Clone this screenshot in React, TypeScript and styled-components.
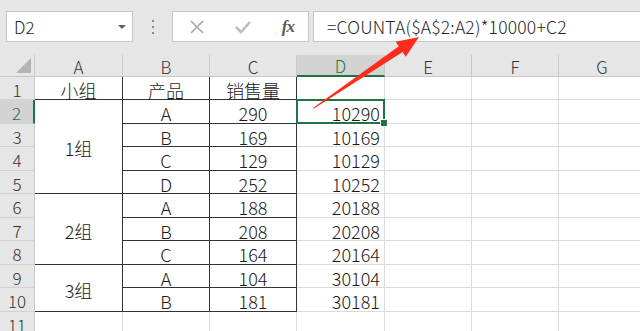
import React from "react";
import styled, { createGlobalStyle, css } from "styled-components";

const GlobalStyle = createGlobalStyle`
  html, body {
    margin: 0;
    padding: 0;
    background: #ffffff;
    overflow: hidden;
  }
  * {
    box-sizing: border-box;
  }
`;

const GREEN = "#217346";
const GRID = "#dadada";
const DARK = "#333333";
const FONT = `"Noto Sans CJK SC", "Liberation Sans", sans-serif`;

const Page = styled.div`
  position: relative;
  width: 640px;
  height: 331px;
  overflow: hidden;
  display: flex;
  flex-direction: column;
  font-family: ${FONT};
  font-weight: 300;
  color: #1a1a1a;
`;

// Formula bar
const FormulaBar = styled.div`
  height: 55px;
  flex: none;
  background: #e6e6e6;
  display: flex;
  align-items: flex-start;
  padding: 11px 0 0 6px;
`;

const Box = styled.div`
  height: 31px;
  background: #ffffff;
  border: 1px solid #c6c6c6;
  display: flex;
  align-items: center;
`;

const NameBox = styled(Box)`
  width: 127px;
  padding: 0 6px 0 7px;
  justify-content: space-between;
  font-size: 17px;
  color: #262626;
`;

const Caret = styled.span`
  width: 0;
  height: 0;
  border-left: 4px solid transparent;
  border-right: 4px solid transparent;
  border-top: 4px solid #606060;
`;

const Grip = styled.div`
  width: 39px;
  height: 31px;
  display: flex;
  flex-direction: column;
  align-items: center;
  justify-content: center;
  gap: 4px;
`;

const Dot = styled.span`
  width: 2px;
  height: 2px;
  background: #8c8c8c;
`;

const FxBox = styled(Box)`
  width: 137px;
  padding: 0 14px 0 17px;
  justify-content: space-between;
`;

const Fx = styled.span`
  font-family: "Liberation Serif", "DejaVu Serif", serif;
  font-style: italic;
  font-weight: bold;
  font-size: 17px;
  color: #5a5a5a;
  letter-spacing: -1px;
`;

const FormulaInput = styled(Box)`
  flex: 1;
  margin-left: 4px;
  border-right: none;
  padding-left: 13px;
  font-size: 17.5px;
  letter-spacing: 0.2px;
  color: #262626;
`;

// Sheet
const Sheet = styled.div`
  flex: 1;
  display: grid;
  grid-template-columns: 35px 88px 87px 87px 88px 87px 87px 87px;
  grid-template-rows: 22px 23px 24px 23px 24px 23px 24px 23px 24px 23px 24px 24px;
  font-size: 18px;
`;

const Corner = styled.div`
  position: relative;
  background: #e6e6e6;
  border-right: 1px solid #c8c8c8;
  border-bottom: 1px solid #c8c8c8;
  &::after {
    content: "";
    position: absolute;
    right: 3px;
    bottom: 3px;
    width: 0;
    height: 0;
    border-left: 15px solid transparent;
    border-bottom: 15px solid #b4b4b4;
  }
`;

const ColHead = styled.div<{ $active?: boolean }>`
  background: ${({ $active }) => ($active ? "#d3d3d3" : "#e6e6e6")};
  color: ${({ $active }) => ($active ? GREEN : "#333333")};
  border-right: 1px solid #c8c8c8;
  border-bottom: ${({ $active }) => ($active ? `2px solid ${GREEN}` : "1px solid #c8c8c8")};
  display: flex;
  align-items: center;
  justify-content: center;
  font-size: 17px;
  line-height: 1;
  padding-top: 1px;
`;

const RowHead = styled.div<{ $active?: boolean; $row: number }>`
  grid-row: ${({ $row }) => $row + 1};
  grid-column: 1;
  background: ${({ $active }) => ($active ? "#d3d3d3" : "#e6e6e6")};
  color: ${({ $active }) => ($active ? GREEN : "#333333")};
  border-right: ${({ $active }) => ($active ? `2px solid ${GREEN}` : "1px solid #c8c8c8")};
  border-bottom: 1px solid #d0d0d0;
  display: flex;
  align-items: center;
  justify-content: center;
  font-size: 17px;
  line-height: 1;
  padding-top: 2px;
`;

const Cell = styled.div<{
  $row: number;
  $col: number;
  $span?: number;
  $boxed?: boolean;
  $align?: "center" | "right";
  $selected?: boolean;
}>`
  position: relative;
  grid-row: ${({ $row, $span = 1 }) => `${$row + 1} / span ${$span}`};
  grid-column: ${({ $col }) => $col + 1};
  border-right: 1px solid ${({ $boxed }) => ($boxed ? DARK : GRID)};
  border-bottom: 1px solid ${({ $boxed }) => ($boxed ? DARK : GRID)};
  display: flex;
  align-items: center;
  justify-content: ${({ $align }) => ($align === "right" ? "flex-end" : "center")};
  padding: 3px 4px 0 4px;
  line-height: 1;
  ${({ $selected }) =>
    $selected &&
    css`
      &::after {
        content: "";
        position: absolute;
        left: -1px;
        top: -1px;
        right: -1px;
        bottom: -1px;
        border: 2px solid ${GREEN};
      }
      &::before {
        content: "";
        position: absolute;
        right: -4px;
        bottom: -4px;
        width: 6px;
        height: 6px;
        background: ${GREEN};
        border: 1px solid #ffffff;
        z-index: 2;
      }
    `}
`;

const Arrow = styled.svg`
  position: absolute;
  left: 0;
  top: 0;
  pointer-events: none;
`;

const columns = ["A", "B", "C", "D", "E", "F", "G"];

type Item = { product: string; sales: number; result: number };

const groups: { name: string; items: Item[] }[] = [
  {
    name: "1组",
    items: [
      { product: "A", sales: 290, result: 10290 },
      { product: "B", sales: 169, result: 10169 },
      { product: "C", sales: 129, result: 10129 },
      { product: "D", sales: 252, result: 10252 },
    ],
  },
  {
    name: "2组",
    items: [
      { product: "A", sales: 188, result: 20188 },
      { product: "B", sales: 208, result: 20208 },
      { product: "C", sales: 164, result: 20164 },
    ],
  },
  {
    name: "3组",
    items: [
      { product: "A", sales: 104, result: 30104 },
      { product: "B", sales: 181, result: 30181 },
    ],
  },
];

const App = () => {
  const cells: React.ReactNode[] = [];
  let row = 2;
  groups.forEach((g) => {
    cells.push(
      <Cell key={`g${row}`} $row={row} $col={1} $span={g.items.length} $boxed>
        {g.name}
      </Cell>
    );
    g.items.forEach((it) => {
      cells.push(
        <Cell key={`b${row}`} $row={row} $col={2} $boxed>
          {it.product}
        </Cell>,
        <Cell key={`c${row}`} $row={row} $col={3} $boxed>
          {it.sales}
        </Cell>,
        <Cell key={`d${row}`} $row={row} $col={4} $align="right" $selected={row === 2}>
          {it.result}
        </Cell>
      );
      for (let c = 5; c <= 7; c++) {
        cells.push(<Cell key={`e${row}-${c}`} $row={row} $col={c} />);
      }
      row++;
    });
  });

  return (
    <>
      <GlobalStyle />
      <Page>
        <FormulaBar>
          <NameBox>
            <span>D2</span>
            <Caret />
          </NameBox>
          <Grip>
            <Dot />
            <Dot />
            <Dot />
          </Grip>
          <FxBox>
            <svg width="14" height="14" viewBox="0 0 14 14">
              <path d="M1 1 L13 13 M13 1 L1 13" stroke="#a6a6a6" strokeWidth="1.6" fill="none" />
            </svg>
            <svg width="16" height="14" viewBox="0 0 16 14">
              <path d="M1 7 L6 12 L15 2" stroke="#bdbdbd" strokeWidth="2.6" fill="none" />
            </svg>
            <Fx>fx</Fx>
          </FxBox>
          <FormulaInput>=COUNTA($A$2:A2)*10000+C2</FormulaInput>
        </FormulaBar>

        <Sheet>
          <Corner />
          {columns.map((c) => (
            <ColHead key={c} $active={c === "D"}>
              {c}
            </ColHead>
          ))}
          {Array.from({ length: 11 }, (_, i) => (
            <RowHead key={i} $row={i + 1} $active={i === 1}>
              {i + 1}
            </RowHead>
          ))}
          <Cell $row={1} $col={1} $boxed>小组</Cell>
          <Cell $row={1} $col={2} $boxed>产品</Cell>
          <Cell $row={1} $col={3} $boxed>销售量</Cell>
          {[4, 5, 6, 7].map((c) => (
            <Cell key={`h${c}`} $row={1} $col={c} />
          ))}
          {cells}
          {[1, 2, 3, 4, 5, 6, 7].map((c) => (
            <Cell key={`r11-${c}`} $row={11} $col={c} />
          ))}
        </Sheet>

        <Arrow width="640" height="331" viewBox="0 0 640 331">
          <polygon
            points="313,108 398.8,46.3 395.7,41.7 419,37 405.7,56.7 402.6,52.1 313.6,108.8"
            fill="#ff2b1c"
          />
        </Arrow>
      </Page>
    </>
  );
};

export default App;
